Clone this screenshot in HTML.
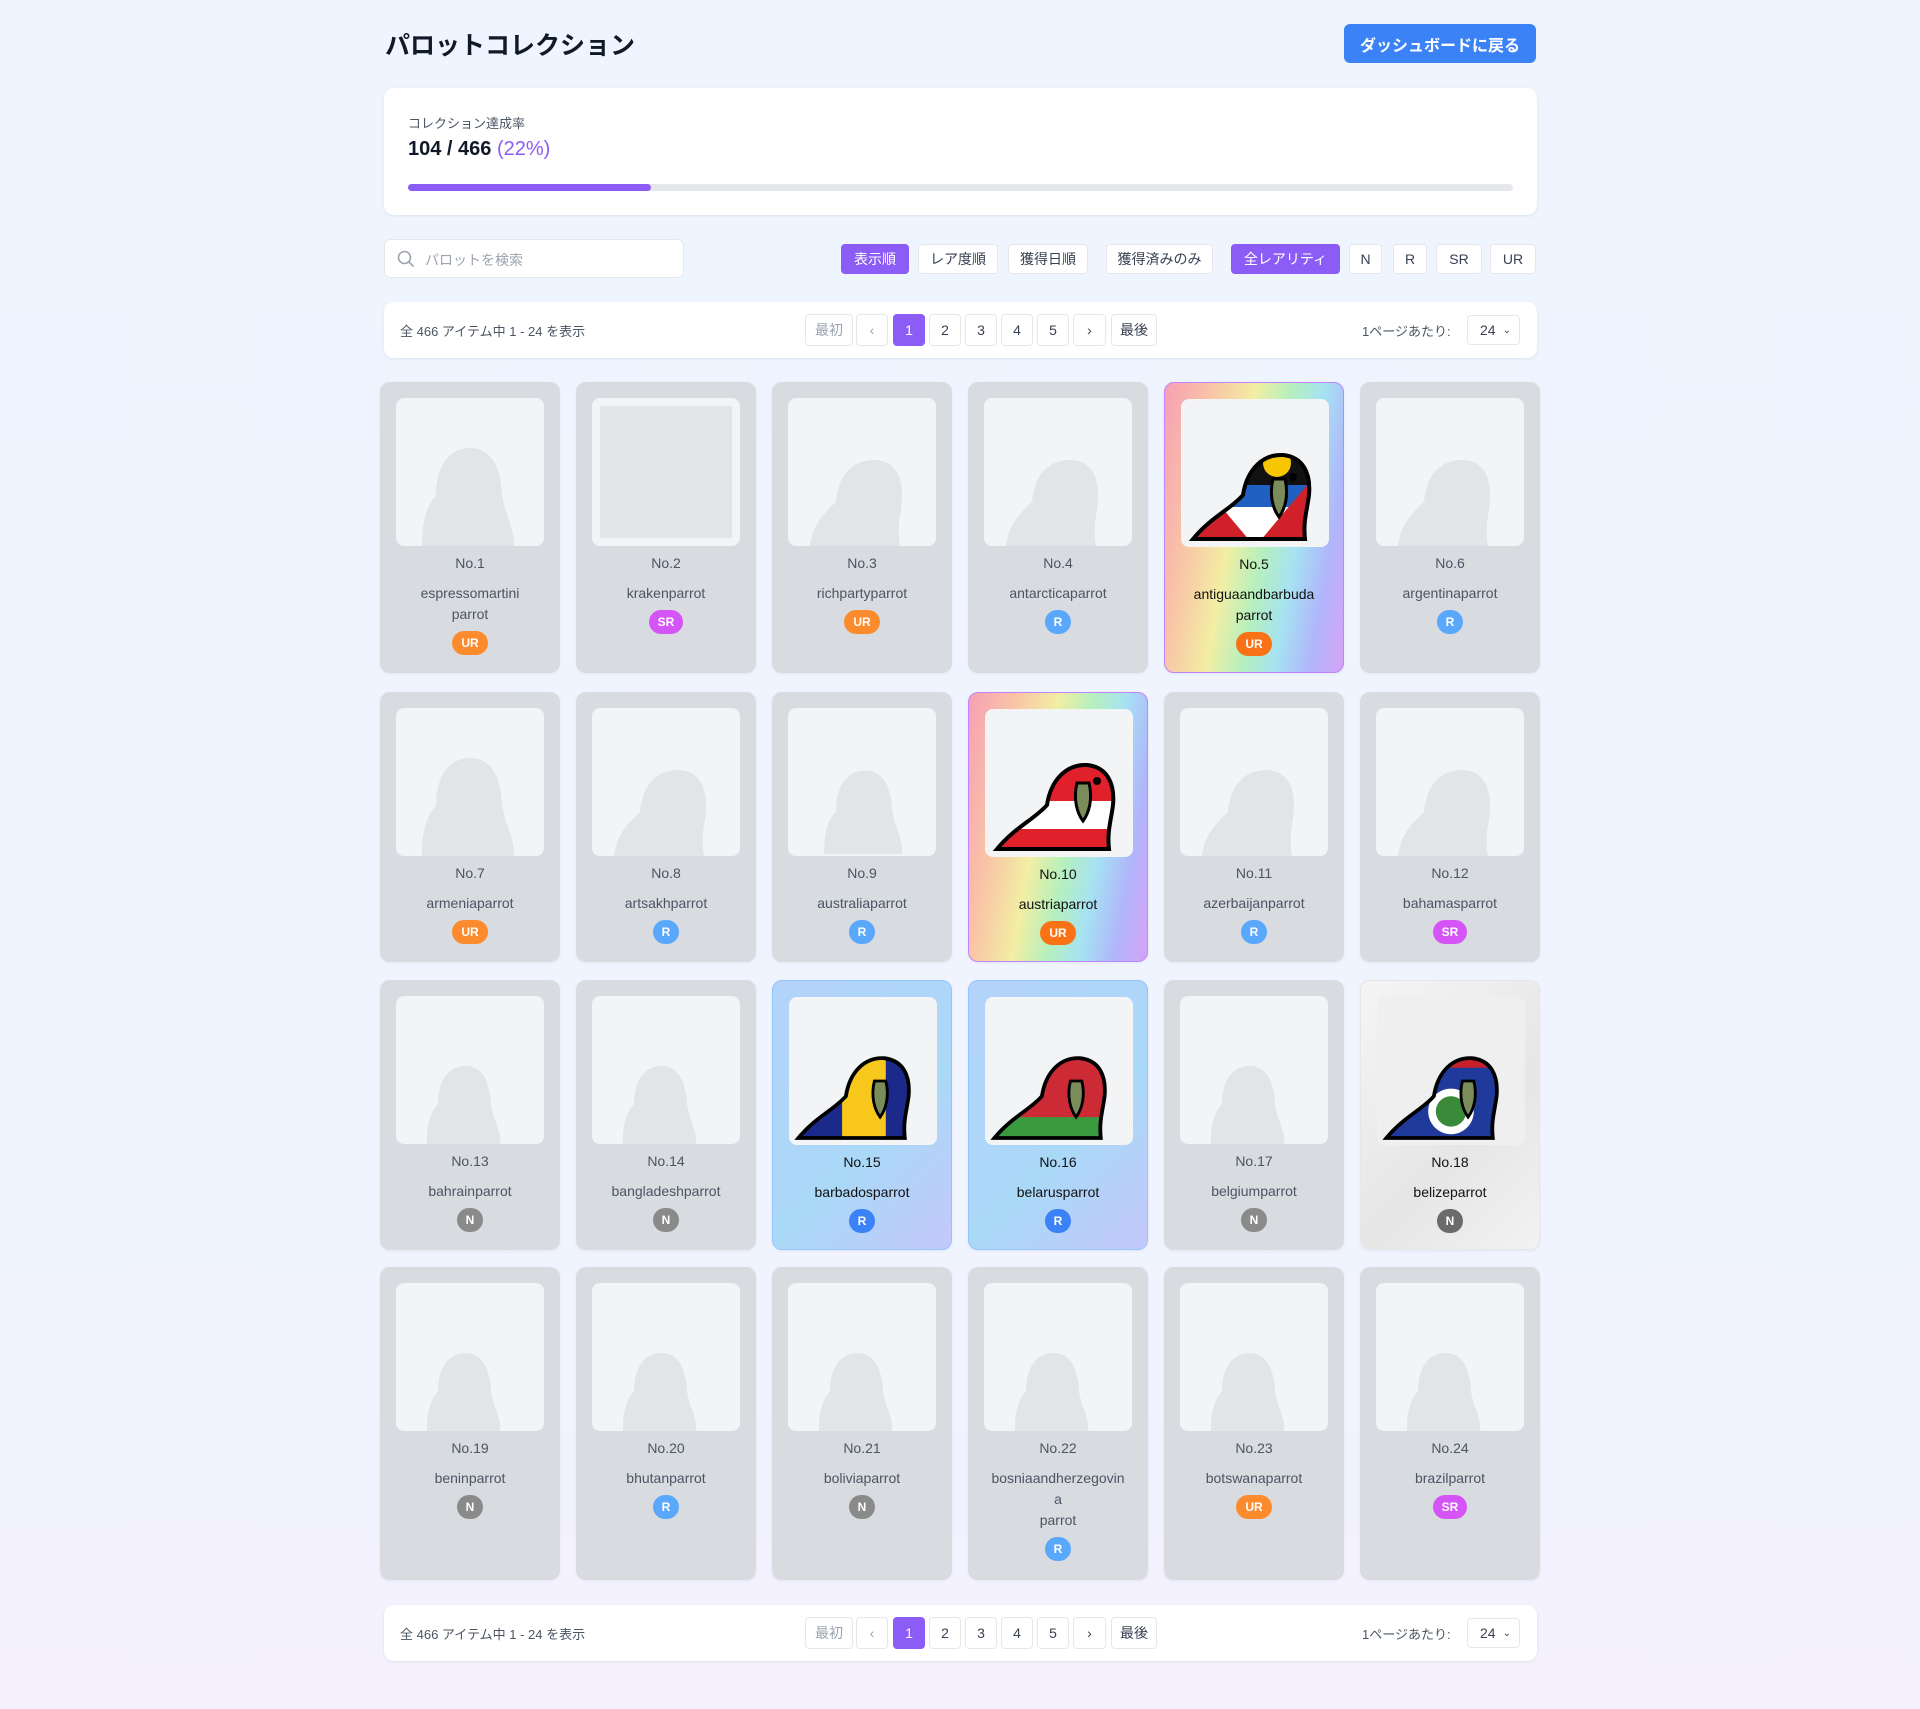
<!DOCTYPE html>
<html><head><meta charset="utf-8">
<style>
*{box-sizing:border-box;margin:0;padding:0}
body{width:1920px;height:1709px;background:linear-gradient(180deg,#eef5ff 0%,#f0f4ff 70%,#f4f1fd 100%);font-family:"Liberation Sans","Noto Sans CJK JP",sans-serif;color:#111827;position:relative;overflow:hidden}
.abs{position:absolute}
h1{position:absolute;left:385px;top:26px;font-size:25px;font-weight:700;letter-spacing:0}
.back{left:1344px;top:24px;width:192px;height:39px;background:#3b82f6;color:#fff;border-radius:6px;font-size:16px;font-weight:700;display:flex;align-items:center;justify-content:center}
.panel{background:#fff;border-radius:10px;box-shadow:0 1px 3px rgba(0,0,0,.08)}
.btn{position:absolute;top:244px;height:30px;border:1px solid #e5e7eb;background:#fff;border-radius:4px;font-size:14px;color:#374151;display:flex;align-items:center;justify-content:center}
.btn.on{background:#8b5cf6;color:#fff;border-color:#8b5cf6}
.pg{position:absolute;height:32px;border:1px solid #e5e7eb;background:#fff;border-radius:4px;font-size:14px;color:#374151;display:flex;align-items:center;justify-content:center}
.pg.on{background:#8b5cf6;color:#fff;border-color:#8b5cf6}
.pg.dis{color:#9ca3af}
.card{position:absolute;width:180px;border-radius:10px;background:#d8dbe0;text-align:center;color:#4b5563;box-shadow:0 1px 3px rgba(0,0,0,.06)}
.img{position:absolute;left:16px;top:16px;width:148px;height:148px;background:#f3f4f6;border-radius:8px;overflow:hidden}
.no{position:absolute;left:0;right:0;top:171px;font-size:14px;line-height:20px}
.nm{position:absolute;left:10px;right:10px;top:201px;font-size:14px;line-height:21px}
.b{display:inline-block;height:24px;line-height:24px;border-radius:12px;color:#fff;font-size:12px;font-weight:700;padding:0 9px;margin-top:6px}
.UR{background:#fb8b2c}.SR{background:#d454f5}.R{background:#5aa8fb}.N{background:#8a8a8a}
.own .no,.own .nm{color:#111}
.rain{background:linear-gradient(100deg,#f6a0b4 0%,#f9c6a6 22%,#f2eea4 40%,#b6f0bc 55%,#a6e2f2 70%,#b0b6fb 85%,#d6a2f6 100%);border:1px solid #c084fc}
.blue{background:linear-gradient(135deg,#b4d3fb,#aad8f7 60%,#c4c8fb);border:1px solid #93c5fd}
.gray{background:linear-gradient(135deg,#f5f5f5,#e6e6e6 60%,#f2f2f2);border:1px solid #e5e7eb}
.own .img{background:#f3f4f6}
</style></head><body>
<h1>パロットコレクション</h1>
<div class="abs back">ダッシュボードに戻る</div>

<div class="abs panel" style="left:384px;top:88px;width:1153px;height:127px">
 <div class="abs" style="left:24px;top:25px;font-size:13px;color:#4b5563">コレクション達成率</div>
 <div class="abs" style="left:24px;top:50px;font-size:20px;font-weight:700">104 / 466 <span style="color:#8b5cf6;font-weight:400">(22%)</span></div>
 <div class="abs" style="left:24px;top:96px;width:1105px;height:7px;background:#e5e7eb;border-radius:4px"><div style="width:243px;height:7px;background:#8b5cf6;border-radius:4px"></div></div>
</div>

<div class="abs panel" style="left:384px;top:239px;width:300px;height:39px;border:1px solid #e5e7eb;box-shadow:none;border-radius:6px">
 <svg class="abs" style="left:12px;top:10px" width="18" height="18" viewBox="0 0 18 18"><circle cx="7.5" cy="7.5" r="6" fill="none" stroke="#9ca3af" stroke-width="1.6"/><path d="M12 12l4.5 4.5" stroke="#9ca3af" stroke-width="1.6"/></svg>
 <div class="abs" style="left:40px;top:10px;font-size:14px;color:#9ca3af">パロットを検索</div>
</div>

<div class="btn on" style="left:841px;width:68px">表示順</div>
<div class="btn" style="left:918px;width:80px">レア度順</div>
<div class="btn" style="left:1008px;width:80px">獲得日順</div>
<div class="btn" style="left:1106px;width:107px">獲得済みのみ</div>
<div class="btn on" style="left:1231px;width:109px">全レアリティ</div>
<div class="btn" style="left:1349px;width:33px">N</div>
<div class="btn" style="left:1393px;width:34px">R</div>
<div class="btn" style="left:1436px;width:46px">SR</div>
<div class="btn" style="left:1490px;width:46px">UR</div>

<div class="abs panel" style="left:384px;top:302px;width:1153px;height:56px">
 <div class="abs" style="left:16px;top:19px;font-size:13px;color:#4b5563">全 466 アイテム中 1 - 24 を表示</div>
 <div class="pg dis" style="left:421px;top:12px;width:48px">最初</div>
 <div class="pg dis" style="left:472px;top:12px;width:32px">‹</div>
 <div class="pg on" style="left:509px;top:12px;width:32px">1</div>
 <div class="pg" style="left:545px;top:12px;width:32px">2</div>
 <div class="pg" style="left:581px;top:12px;width:32px">3</div>
 <div class="pg" style="left:617px;top:12px;width:32px">4</div>
 <div class="pg" style="left:653px;top:12px;width:32px">5</div>
 <div class="pg" style="left:689px;top:12px;width:33px">›</div>
 <div class="pg" style="left:727px;top:12px;width:46px">最後</div>
 <div class="abs" style="left:978px;top:19px;font-size:13px;color:#4b5563">1ページあたり:</div>
 <div class="pg" style="left:1083px;top:13px;width:53px;height:30px;justify-content:flex-start;padding-left:12px">24 <span style="position:absolute;right:8px;font-size:10px">⌄</span></div>
</div>
<div class="abs panel" style="left:384px;top:1605px;width:1153px;height:56px">
 <div class="abs" style="left:16px;top:19px;font-size:13px;color:#4b5563">全 466 アイテム中 1 - 24 を表示</div>
 <div class="pg dis" style="left:421px;top:12px;width:48px">最初</div>
 <div class="pg dis" style="left:472px;top:12px;width:32px">‹</div>
 <div class="pg on" style="left:509px;top:12px;width:32px">1</div>
 <div class="pg" style="left:545px;top:12px;width:32px">2</div>
 <div class="pg" style="left:581px;top:12px;width:32px">3</div>
 <div class="pg" style="left:617px;top:12px;width:32px">4</div>
 <div class="pg" style="left:653px;top:12px;width:32px">5</div>
 <div class="pg" style="left:689px;top:12px;width:33px">›</div>
 <div class="pg" style="left:727px;top:12px;width:46px">最後</div>
 <div class="abs" style="left:978px;top:19px;font-size:13px;color:#4b5563">1ページあたり:</div>
 <div class="pg" style="left:1083px;top:13px;width:53px;height:30px;justify-content:flex-start;padding-left:12px">24 <span style="position:absolute;right:8px;font-size:10px">⌄</span></div>
</div>

<svg width="0" height="0" style="position:absolute">
 <defs>
  <path id="sil" d="M22 148 C24 128 36 115 48 104 C50 80 62 62 86 62 C106 62 114 78 114 96 C114 116 108 126 112 148 Z" fill="#e2e4e8"/>
  <path id="sil2" d="M26 148 C26 125 30 108 40 98 C40 70 52 50 74 50 C96 50 104 70 106 94 C108 118 118 125 118 148 Z" fill="#e2e4e8"/>
  <clipPath id="pc"><path d="M12 140 C30 118 50 110 62 96 C66 70 82 55 102 56 C122 58 130 74 128 96 C126 112 122 122 124 140 Z"/></clipPath>
 </defs>
</svg>

<div class="card" style="left:380px;top:382px;height:291px"><div class="img"><svg width="148" height="148"><use href="#sil2"/></svg></div><div class="no">No.1</div><div class="nm">espressomartini<br>parrot<br><span class="b UR">UR</span></div></div>
<div class="card" style="left:576px;top:382px;height:291px"><div class="img"><div style="position:absolute;left:8px;top:8px;width:132px;height:132px;background:#e2e4e8"></div></div><div class="no">No.2</div><div class="nm">krakenparrot<br><span class="b SR">SR</span></div></div>
<div class="card" style="left:772px;top:382px;height:291px"><div class="img"><svg width="148" height="148"><use href="#sil"/></svg></div><div class="no">No.3</div><div class="nm">richpartyparrot<br><span class="b UR">UR</span></div></div>
<div class="card" style="left:968px;top:382px;height:291px"><div class="img"><svg width="148" height="148"><use href="#sil"/></svg></div><div class="no">No.4</div><div class="nm">antarcticaparrot<br><span class="b R">R</span></div></div>
<div class="card own rain" style="left:1164px;top:382px;height:291px"><div class="img"><svg width="148" height="148"><g clip-path="url(#pc)"><rect width="148" height="148" fill="#fff"/><rect y="56" width="148" height="30" fill="#111"/><rect y="86" width="148" height="22" fill="#2060c0"/><path d="M0 60 L74 148 L0 148Z" fill="#d0202a"/><path d="M148 60 L74 148 L148 148Z" fill="#d0202a"/><circle cx="96" cy="64" r="14" fill="#f7c600"/></g><path d="M12 140 C30 118 50 110 62 96 C66 70 82 55 102 56 C122 58 130 74 128 96 C126 112 122 122 124 140 Z" fill="none" stroke="#000" stroke-width="4"/><path d="M92 80 C88 96 92 110 98 118 C104 110 108 96 104 80Z" fill="#7a8c5a" stroke="#000" stroke-width="3"/><circle cx="112" cy="78" r="4" fill="#000"/></svg></div><div class="no">No.5</div><div class="nm">antiguaandbarbuda<br>parrot<br><span class="b UR" style="background:#f97316">UR</span></div></div>
<div class="card" style="left:1360px;top:382px;height:291px"><div class="img"><svg width="148" height="148"><use href="#sil"/></svg></div><div class="no">No.6</div><div class="nm">argentinaparrot<br><span class="b R">R</span></div></div>

<div class="card" style="left:380px;top:692px;height:270px"><div class="img"><svg width="148" height="148"><use href="#sil2"/></svg></div><div class="no">No.7</div><div class="nm">armeniaparrot<br><span class="b UR">UR</span></div></div>
<div class="card" style="left:576px;top:692px;height:270px"><div class="img"><svg width="148" height="148"><use href="#sil"/></svg></div><div class="no">No.8</div><div class="nm">artsakhparrot<br><span class="b R">R</span></div></div>
<div class="card" style="left:772px;top:692px;height:270px"><div class="img"><svg width="148" height="148"><use href="#sil2" transform="translate(14 20) scale(.85)"/></svg></div><div class="no">No.9</div><div class="nm">australiaparrot<br><span class="b R">R</span></div></div>
<div class="card own rain" style="left:968px;top:692px;height:270px"><div class="img"><svg width="148" height="148"><g clip-path="url(#pc)"><rect width="148" height="148" fill="#e0202a"/><rect y="92" width="148" height="28" fill="#fff"/></g><path d="M12 140 C30 118 50 110 62 96 C66 70 82 55 102 56 C122 58 130 74 128 96 C126 112 122 122 124 140 Z" fill="none" stroke="#000" stroke-width="4"/><path d="M92 74 C88 90 92 104 98 112 C104 104 108 90 104 74Z" fill="#7a8c5a" stroke="#000" stroke-width="3"/><circle cx="112" cy="72" r="4" fill="#000"/></svg></div><div class="no">No.10</div><div class="nm">austriaparrot<br><span class="b UR" style="background:#f97316">UR</span></div></div>
<div class="card" style="left:1164px;top:692px;height:270px"><div class="img"><svg width="148" height="148"><use href="#sil"/></svg></div><div class="no">No.11</div><div class="nm">azerbaijanparrot<br><span class="b R">R</span></div></div>
<div class="card" style="left:1360px;top:692px;height:270px"><div class="img"><svg width="148" height="148"><use href="#sil"/></svg></div><div class="no">No.12</div><div class="nm">bahamasparrot<br><span class="b SR">SR</span></div></div>

<div class="card" style="left:380px;top:980px;height:270px"><div class="img"><svg width="148" height="148"><use href="#sil2" transform="translate(10 30) scale(.8)"/></svg></div><div class="no">No.13</div><div class="nm">bahrainparrot<br><span class="b N">N</span></div></div>
<div class="card" style="left:576px;top:980px;height:270px"><div class="img"><svg width="148" height="148"><use href="#sil2" transform="translate(10 30) scale(.8)"/></svg></div><div class="no">No.14</div><div class="nm">bangladeshparrot<br><span class="b N">N</span></div></div>
<div class="card own blue" style="left:772px;top:980px;height:270px"><div class="img"><svg width="148" height="148"><g transform="translate(-2 8) scale(.95)"><g clip-path="url(#pc)"><rect width="148" height="148" fill="#f7c71c"/><rect width="58" height="148" fill="#1b2a8a"/><rect x="104" width="44" height="148" fill="#1b2a8a"/></g><path d="M12 140 C30 118 50 110 62 96 C66 70 82 55 102 56 C122 58 130 74 128 96 C126 112 122 122 124 140 Z" fill="none" stroke="#000" stroke-width="4"/><path d="M92 80 C88 96 92 110 98 118 C104 110 108 96 104 80Z" fill="#7a8c5a" stroke="#000" stroke-width="3"/></g></svg></div><div class="no">No.15</div><div class="nm">barbadosparrot<br><span class="b R" style="background:#3b82f6">R</span></div></div>
<div class="card own blue" style="left:968px;top:980px;height:270px"><div class="img"><svg width="148" height="148"><g transform="translate(-2 8) scale(.95)"><g clip-path="url(#pc)"><rect width="148" height="148" fill="#cc2b36"/><rect y="118" width="148" height="30" fill="#3a9a40"/></g><path d="M12 140 C30 118 50 110 62 96 C66 70 82 55 102 56 C122 58 130 74 128 96 C126 112 122 122 124 140 Z" fill="none" stroke="#000" stroke-width="4"/><path d="M92 80 C88 96 92 110 98 118 C104 110 108 96 104 80Z" fill="#7a8c5a" stroke="#000" stroke-width="3"/></g></svg></div><div class="no">No.16</div><div class="nm">belarusparrot<br><span class="b R" style="background:#3b82f6">R</span></div></div>
<div class="card" style="left:1164px;top:980px;height:270px"><div class="img"><svg width="148" height="148"><use href="#sil2" transform="translate(10 30) scale(.8)"/></svg></div><div class="no">No.17</div><div class="nm">belgiumparrot<br><span class="b N">N</span></div></div>
<div class="card own gray" style="left:1360px;top:980px;height:270px"><div class="img" style="background:#efefef"><svg width="148" height="148"><g transform="translate(-2 8) scale(.95)"><g clip-path="url(#pc)"><rect width="148" height="148" fill="#1f3a9a"/><rect y="56" width="148" height="10" fill="#c8202a"/><circle cx="80" cy="112" r="24" fill="#fff"/><circle cx="80" cy="112" r="16" fill="#3a8a3a"/></g><path d="M12 140 C30 118 50 110 62 96 C66 70 82 55 102 56 C122 58 130 74 128 96 C126 112 122 122 124 140 Z" fill="none" stroke="#000" stroke-width="4"/><path d="M92 80 C88 96 92 110 98 118 C104 110 108 96 104 80Z" fill="#7a8c5a" stroke="#000" stroke-width="3"/></g></svg></div><div class="no">No.18</div><div class="nm">belizeparrot<br><span class="b N" style="background:#6b6b6b">N</span></div></div>

<div class="card" style="left:380px;top:1267px;height:313px"><div class="img"><svg width="148" height="148"><use href="#sil2" transform="translate(10 30) scale(.8)"/></svg></div><div class="no">No.19</div><div class="nm">beninparrot<br><span class="b N">N</span></div></div>
<div class="card" style="left:576px;top:1267px;height:313px"><div class="img"><svg width="148" height="148"><use href="#sil2" transform="translate(10 30) scale(.8)"/></svg></div><div class="no">No.20</div><div class="nm">bhutanparrot<br><span class="b R">R</span></div></div>
<div class="card" style="left:772px;top:1267px;height:313px"><div class="img"><svg width="148" height="148"><use href="#sil2" transform="translate(10 30) scale(.8)"/></svg></div><div class="no">No.21</div><div class="nm">boliviaparrot<br><span class="b N">N</span></div></div>
<div class="card" style="left:968px;top:1267px;height:313px"><div class="img"><svg width="148" height="148"><use href="#sil2" transform="translate(10 30) scale(.8)"/></svg></div><div class="no">No.22</div><div class="nm">bosniaandherzegovin<br>a<br>parrot<br><span class="b R">R</span></div></div>
<div class="card" style="left:1164px;top:1267px;height:313px"><div class="img"><svg width="148" height="148"><use href="#sil2" transform="translate(10 30) scale(.8)"/></svg></div><div class="no">No.23</div><div class="nm">botswanaparrot<br><span class="b UR">UR</span></div></div>
<div class="card" style="left:1360px;top:1267px;height:313px"><div class="img"><svg width="148" height="148"><use href="#sil2" transform="translate(10 30) scale(.8)"/></svg></div><div class="no">No.24</div><div class="nm">brazilparrot<br><span class="b SR">SR</span></div></div>

</body></html>
